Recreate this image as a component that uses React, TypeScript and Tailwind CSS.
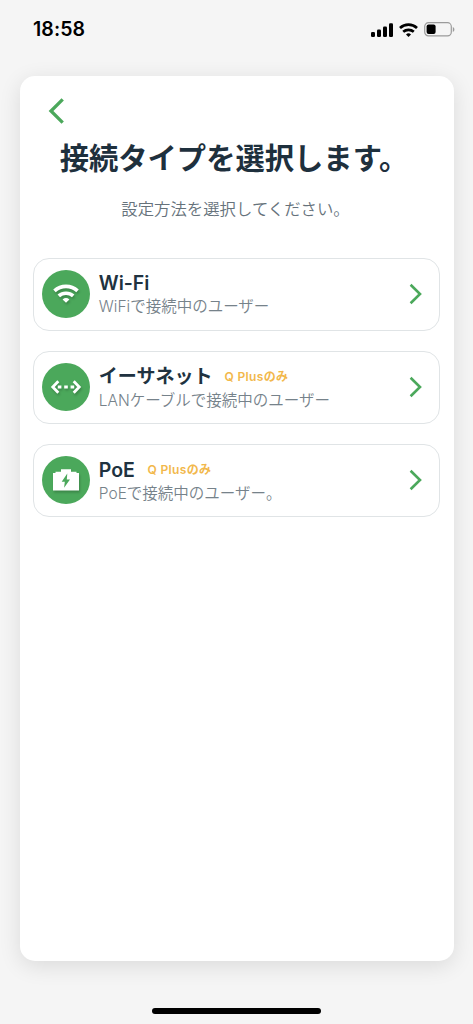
import React from 'react';

const sans = "font-['Inter','Noto_Sans_CJK_JP',sans-serif]";

function StatusBar() {
  return (
    <header className="flex h-[75.5px] shrink-0 items-start justify-between pl-[33px] pr-[18px] pt-[18px]">
      <time className="text-[19.5px] font-semibold leading-[23px] tracking-[0.1px] text-black">18:58</time>
      <div className="flex h-[23px] items-center gap-[6px]">
        <svg width="22" height="14" viewBox="0 0 22 14" fill="black">
          <rect x="0" y="9" width="4" height="5" rx="1.2" />
          <rect x="6" y="6.5" width="4" height="7.5" rx="1.2" />
          <rect x="12" y="3.5" width="4" height="10.5" rx="1.2" />
          <rect x="18" y="0.3" width="4" height="13.7" rx="1.2" />
        </svg>
        <WifiGlyph className="h-[14px] w-[19px]" />
        <svg width="31" height="15" viewBox="0 0 31 15">
          <rect x="0.7" y="0.7" width="26.6" height="13.2" rx="3.8" fill="none" stroke="#9b9b9b" strokeWidth="1.2" />
          <rect x="2.6" y="2.6" width="9" height="9.4" rx="2" fill="black" />
          <path d="M28.8 5v5c1-.4 1.6-1.4 1.6-2.5S29.8 5.4 28.8 5z" fill="#9b9b9b" />
        </svg>
      </div>
    </header>
  );
}

function WifiGlyph({ className }: { className: string }) {
  return (
    <svg className={className} viewBox="0 0 19 14" fill="none" stroke="currentColor" strokeWidth="2.7">
      <path d="M1 5a12.600 12.600 0 0 1 17 0" />
      <path d="M4.200 8.800a8 8 0 0 1 10.600 0" />
      <path d="M9.500 13.900 7 11.400a3.800 3.800 0 0 1 5 0z" fill="currentColor" stroke="none" />
    </svg>
  );
}

function EthernetGlyph() {
  return (
    <svg width="32" height="16" viewBox="0 0 32 16" fill="none" stroke="white" strokeWidth="2.8" className="drop-shadow-[1px_2px_1px_rgba(0,0,0,0.2)]">
      <path d="M8.300 2.300 2.800 8l5.500 5.700M23.700 2.300 29.200 8l-5.500 5.700" />
      <path d="M7.800 8h3.600M14.200 8h3.600M20.600 8h3.600" />
    </svg>
  );
}

function PoeGlyph() {
  return (
    <svg width="26" height="24" viewBox="0 0 26 24" className="drop-shadow-[1px_2px_1px_rgba(0,0,0,0.2)]">
      <path d="M0 5h2.500V3.800H8V1.300h10v2.500h5.500V5H26v17.500H0z" fill="white" />
      <path d="M14.300 5.500 8.700 13.700h3.100l-.7 6 5.900-8.200h-3.200z" fill="#4ba85b" />
    </svg>
  );
}

type OptionProps = {
  icon: React.ReactNode;
  title: string;
  badge?: string;
  note: string;
  titleClass?: string;
  badgeClass?: string;
};

function Option({ icon, title, badge, note, titleClass = 'text-[19.5px]', badgeClass = 'ml-[12.500px]' }: OptionProps) {
  return (
    <button className="flex h-[73px] w-full items-center rounded-[16px] border-[1.3px] border-[#e0e4e6] pb-[0.5px] pl-[8px] pr-[16px] text-left">
      <span className="flex size-[48px] shrink-0 items-center justify-center rounded-full bg-[#4ba85b] text-white">{icon}</span>
      <span className="ml-[9px] flex flex-1 flex-col pt-[2px]">
        <span className="flex h-[24px] items-center whitespace-nowrap">
          <span className={`font-semibold leading-[24px] text-[#203240] ${titleClass}`}>{title}</span>
          {badge && <span className={`text-[12px] font-semibold leading-[24px] tracking-[0.35px] text-[#f2b84b] ${badgeClass}`}>{badge}</span>}
        </span>
        <span className="h-[23px] whitespace-nowrap text-[15.5px] font-[350] leading-[23px] text-[#76828a]">{note}</span>
      </span>
      <svg width="14" height="22" viewBox="0 0 14 22" fill="none" stroke="#4ba85b" strokeWidth="2.6">
        <path d="M1.600 1.800 11 11l-9.400 9.200" />
      </svg>
    </button>
  );
}

export default function App() {
  return (
    <main className={`flex h-[1024px] w-full flex-col bg-[#f5f5f5] ${sans}`}>
      <StatusBar />
      <section className="mx-[19.5px] flex h-[885.5px] shrink-0 flex-col rounded-[15px] bg-white px-[13.3px] shadow-[0_5px_22px_rgba(0,0,0,0.11)]">
        <button aria-label="戻る" className="ml-[15px] mt-[21px] h-[28px] w-[18px] text-[#4ba85b]">
          <svg width="18" height="28" viewBox="0 0 18 28" fill="none" stroke="currentColor" strokeWidth="3.3">
            <path d="M14.700 2.400 3 14l11.700 11.600" />
          </svg>
        </button>
        <h1 className="mt-[14px] h-[40px] whitespace-nowrap pr-[5px] text-center text-[29.3px] font-bold leading-[40px] text-[#1e303d]">接続タイプを選択します。</h1>
        <p className="mt-[18.5px] h-[24px] pr-[2px] text-center text-[16.4px] font-[350] leading-[24px] text-[#66727b]">設定方法を選択してください。</p>
        <div className="mt-[36.5px] flex flex-col gap-[20.3px]">
          <Option icon={<WifiGlyph className="h-[19px] w-[26px] drop-shadow-[1px_2px_1px_rgba(0,0,0,0.2)]" />} title="Wi-Fi" note="WiFiで接続中のユーザー" />
          <Option icon={<EthernetGlyph />} title="イーサネット" badge="Q Plusのみ" note="LANケーブルで接続中のユーザー" titleClass="text-[19px]" badgeClass="ml-[12px]" />
          <Option icon={<PoeGlyph />} title="PoE" badge="Q Plusのみ" note="PoEで接続中のユーザー。" />
        </div>
      </section>
      <footer className="flex flex-1 items-start justify-center pt-[46.5px]">
        <span className="h-[6.5px] w-[169px] rounded-full bg-black" />
      </footer>
    </main>
  );
}
